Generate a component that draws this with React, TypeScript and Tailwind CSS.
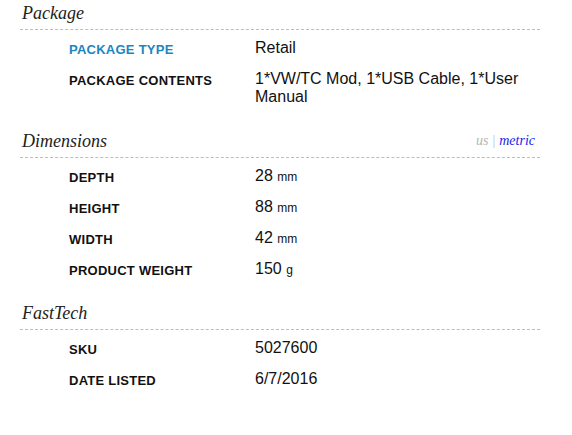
import React from "react";

type Row = { label: string; value: React.ReactNode; highlight?: boolean };

const sans = { fontFamily: '"Liberation Sans", Arial, sans-serif' };

function Unit({ n, u }: { n: string; u: string }) {
  return (
    <span>
      {n} <span className="text-[12px] leading-none">{u}</span>
    </span>
  );
}

function Section({
  title,
  rows,
  extra,
  mt,
}: {
  title: string;
  rows: Row[];
  extra?: React.ReactNode;
  mt: string;
}) {
  return (
    <div className={mt}>
      <div className="flex h-[30px] items-baseline justify-between border-b border-dashed border-[#bdbdbd] pt-[2px] pl-[2px]">
        <span className="font-['Liberation_Serif',serif] text-[18px] italic leading-[22px] text-[#222]">
          {title}
        </span>
        {extra}
      </div>
      <div className="pt-[2px]">
        {rows.map((r) => (
          <div key={r.label} className="flex items-start pl-[49px] pt-[7px] pb-[6px]" style={sans}>
            <div
              className={
                "w-[186px] shrink-0 pt-[3px] text-[13px] font-bold uppercase leading-[15px] tracking-[0.25px] " +
                (r.highlight ? "text-[#1a86c0]" : "text-[#111]")
              }
            >
              {r.label}
            </div>
            <div className="min-w-0 flex-1 text-[16px] leading-[18px] text-[#111]">{r.value}</div>
          </div>
        ))}
      </div>
    </div>
  );
}

export default function App() {
  return (
    <div className="h-[435px] w-[572px] bg-white">
      <div className="ml-[20px] w-[520px]">
        <Section
          mt="mt-0"
          title="Package"
          rows={[
            { label: "Package Type", value: "Retail", highlight: true },
            { label: "Package Contents", value: "1*VW/TC Mod, 1*USB Cable, 1*User Manual" },
          ]}
        />
        <Section
          mt="mt-[16px]"
          title="Dimensions"
          extra={
            <span className="relative top-[-2px] pr-[5px] font-['Liberation_Serif',serif] text-[14px] italic leading-[16px]">
              <span className="text-[#b5b5b5]">us</span>
              <span className="px-[4px] not-italic text-[#b8c0d8]">|</span>
              <span className="text-[#2222ee]">metric</span>
            </span>
          }
          rows={[
            { label: "Depth", value: <Unit n="28" u="mm" /> },
            { label: "Height", value: <Unit n="88" u="mm" /> },
            { label: "Width", value: <Unit n="42" u="mm" /> },
            { label: "Product Weight", value: <Unit n="150" u="g" /> },
          ]}
        />
        <Section
          mt="mt-[16px]"
          title="FastTech"
          rows={[
            { label: "SKU", value: "5027600" },
            { label: "Date Listed", value: "6/7/2016" },
          ]}
        />
      </div>
    </div>
  );
}
